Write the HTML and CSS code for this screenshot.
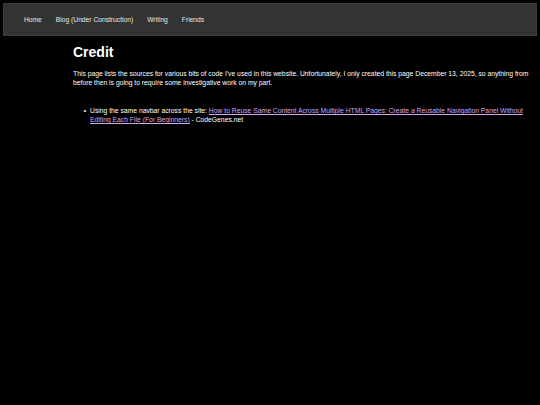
FILE: index.html
```html
<!DOCTYPE html>
<html lang="en">
<head>
<meta charset="utf-8">
<title>Credit</title>
<link rel="stylesheet" href="styles.css">
</head>
<body>
<nav class="navbar">
  <a class="nav-link" href="#">Home</a>
  <a class="nav-link" href="#">Blog (Under Construction)</a>
  <a class="nav-link" href="#">Writing</a>
  <a class="nav-link" href="#">Friends</a>
</nav>
<main class="content">
  <h1 class="title">Credit</h1>
  <p class="intro">This page lists the sources for various bits of code I've used in this website. Unfortunately, I only created this page December 13, 2025, so anything from before then is going to require some investigative work on my part.</p>
  <ul class="credits">
    <li class="credit-item">Using the same navbar across the site: <a class="credit-link" href="#">How to Reuse Same Content Across Multiple HTML Pages: Create a Reusable Navigation Panel Without Editing Each File (For Beginners)</a> - CodeGenes.net</li>
  </ul>
</main>
</body>
</html>
```

FILE: styles.css
```css
html, body {
  margin: 0;
  padding: 0;
  background: #000;
}
body {
  font-family: "Liberation Sans", Arial, sans-serif;
  color: #fff;
  font-size: 6.7px;
  padding: 3px 3.5px 3px 3px;
}
.navbar {
  display: flex;
  align-items: center;
  height: 31px;
  background: #333;
  border: 1px solid #3c3c3c;
  padding: 0 0 0 13px;
}
.nav-link {
  color: #e8e8e8;
  text-decoration: none;
  padding: 0 7px;
}
.content {
  padding: 0 6px 0 70px;
  font-size: 6.78px;
}
.title {
  font-size: 14px;
  font-weight: bold;
  margin: 7px 0 0 0;
  line-height: 18px;
}
.intro {
  margin: 8px 0 0 0;
  line-height: 9px;
}
.credits {
  margin: 19px 0 0 0;
  padding-left: 17px;
  line-height: 9px;
}
.credit-item::marker {
  content: "\2022   ";
}
.credit-link {
  color: #d4a5ee;
}
```
